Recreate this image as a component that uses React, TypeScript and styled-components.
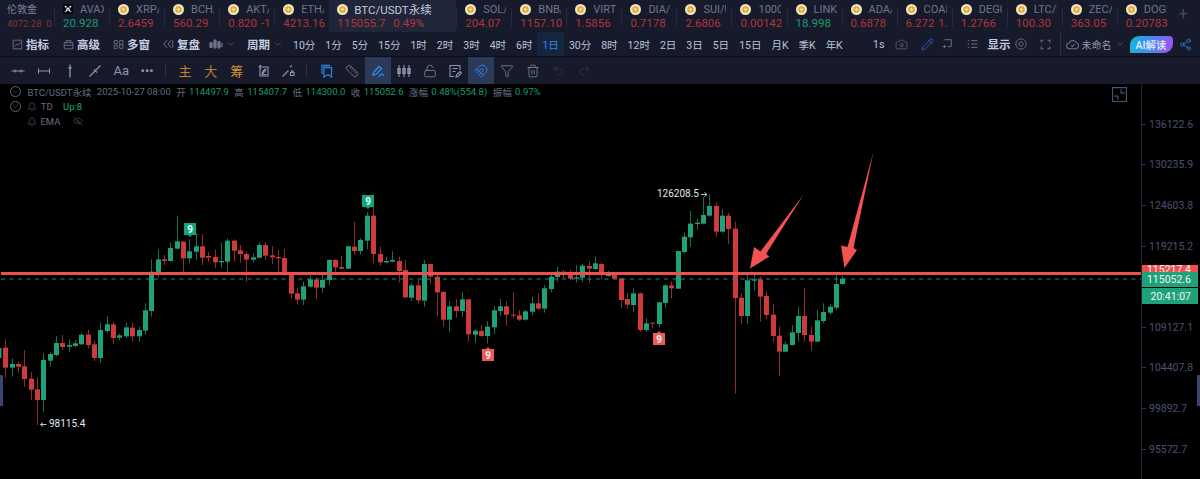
import React from "react";
import styled, { createGlobalStyle } from "styled-components";
import {
  Bell,
  Camera,
  ChevronDown,
  EyeOff,
  Filter,
  LockOpen,
  Magnet,
  Pencil,
  Redo2,
  Ruler,
  Share2,
  Trash2,
  Undo2,
} from "lucide-react";

const FONT = `Roboto, "Noto Sans CJK SC", sans-serif`;

const GlobalStyle = createGlobalStyle`
  html, body { margin: 0; padding: 0; background: #000; }
  body { font-family: ${FONT}; overflow: hidden; }
`;

const Page = styled.div`
  width: 1200px;
  height: 479px;
  display: flex;
  flex-direction: column;
  overflow: hidden;
  background: #000;
`;

/* ticker strip */
const TickerRow = styled.div`
  height: 32px;
  display: flex;
  background: #161a2b;
  flex: none;
`;

const GoldCell = styled.div`
  width: 54px;
  flex: none;
  padding: 3px 0 0 7px;
  box-sizing: border-box;
  color: #7d8397;
  font-size: 10px;
  line-height: 13px;
  & > b {
    display: block;
    font-weight: 400;
    color: #86303a;
    font-size: 9.5px;
    line-height: 12px;
    margin-top: 2px;
    white-space: nowrap;
  }
`;

const TickerCell = styled.div<{ $active?: boolean }>`
  width: ${(p) => (p.$active ? "127px" : "55.05px")};
  flex: none;
  box-sizing: border-box;
  position: relative;
  padding: 3px 0 0 ${(p) => (p.$active ? "8px" : "9px")};
  background: ${(p) => (p.$active ? "#1f2639" : "transparent")};
  overflow: hidden;
  &::before {
    content: "";
    display: ${(p) => (p.$active ? "none" : "block")};
    position: absolute;
    left: 0;
    top: 8px;
    height: 18px;
    width: 1px;
    background: #262c3f;
  }
`;

const TickerName = styled.div<{ $active?: boolean }>`
  display: flex;
  align-items: center;
  gap: ${(p) => (p.$active ? "6px" : "7px")};
  height: 12px;
  width: ${(p) => (p.$active ? "auto" : "41px")};
  overflow: hidden;
  white-space: nowrap;
  color: ${(p) => (p.$active ? "#c3cbdc" : "#6f7689")};
  font-size: ${(p) => (p.$active ? "11.5px" : "11px")};
  & > svg { flex: none; }
`;

const TickerPrice = styled.div<{ $up?: boolean; $active?: boolean }>`
  margin-top: 1px;
  width: ${(p) => (p.$active ? "auto" : "42px")};
  overflow: hidden;
  white-space: nowrap;
  color: ${(p) => (p.$up ? "#1d9a70" : "#b5343a")};
  font-size: 11.5px;
  line-height: 14px;
  word-spacing: 1px;
`;

const PlusCell = styled.div`
  flex: none;
  margin-left: 7px;
  color: #454c60;
  font-size: 16px;
  line-height: 28px;
`;

/* main toolbar */
const MainBar = styled.div`
  height: 24px;
  display: flex;
  align-items: stretch;
  background: #161a2b;
  padding-left: 12px;
  border-bottom: 1px solid #0b0e18;
  flex: none;
  color: #bcc6da;
  font-size: 11px;
`;

const BarItem = styled.div<{ $ml?: number; $strong?: boolean; $tone?: string }>`
  display: flex;
  align-items: center;
  gap: 3px;
  flex: none;
  margin-left: ${(p) => p.$ml ?? 0}px;
  font-size: ${(p) => (p.$strong ? "11.5px" : "11px")};
  color: ${(p) => (p.$strong ? "#c3cde0" : "#b3bdd2")};
  font-weight: ${(p) => (p.$strong ? 600 : 400)};
  white-space: nowrap;
  & > svg { color: ${(p) => p.$tone ?? "#6d7488"}; flex: none; }
`;

const LayoutName = styled.span`
  font-size: 10px;
  color: #8e96aa;
`;

const PeriodList = styled.div`
  display: flex;
  margin-left: 5px;
`;

const Period = styled.div<{ $active?: boolean }>`
  display: flex;
  align-items: center;
  padding: 0 5px;
  color: ${(p) => (p.$active ? "#2a8bf2" : "#b9c4d9")};
  background: ${(p) => (p.$active ? "#16263f" : "transparent")};
  font-size: 10.5px;
  white-space: nowrap;
`;

const BarDivider = styled.div`
  width: 1px;
  margin-left: 9px;
  background: #2b3145;
  flex: none;
`;

const AiButton = styled.div`
  margin: 4px 0 3px 5px;
  width: 43px;
  display: flex;
  align-items: center;
  justify-content: center;
  color: #e8eefc;
  font-size: 10.5px;
  font-weight: 500;
  border-radius: 9px 4px 9px 0;
  background: linear-gradient(100deg, #16b7d8 0%, #3f8ef0 45%, #a44df0 100%);
  flex: none;
`;

/* drawing toolbar */
const DrawBar = styled.div`
  height: 27px;
  display: flex;
  align-items: stretch;
  padding-left: 5px;
  background: #161a2b;
  flex: none;
`;

const DrawCell = styled.div<{ $active?: boolean; $tone?: string }>`
  width: 25.85px;
  flex: none;
  display: flex;
  align-items: center;
  justify-content: center;
  font-size: 13px;
  color: ${(p) => p.$tone ?? "#8f97ab"};
  background: ${(p) => (p.$active ? "#2a3a58" : "transparent")};
`;

const DrawDivider = styled.div`
  width: 1px;
  height: 13px;
  align-self: center;
  margin: 0 6px 0 5px;
  background: #2b3145;
  flex: none;
`;

/* chart */
const ChartWrap = styled.div`
  flex: 1;
  display: flex;
  min-height: 0;
`;

const Plot = styled.div`
  flex: 1;
  position: relative;
  padding: 0 0 0 10px;
`;

const PlotSvg = styled.svg`
  position: absolute;
  inset: 0;
  width: 100%;
  height: 100%;
`;

const CollapseBox = styled.div`
  position: absolute;
  top: 3px;
  right: 14px;
  width: 15px;
  height: 14px;
  color: #4a5370;
`;

const Legend = styled.div`
  position: relative;
  display: flex;
  flex-direction: column;
  color: #666e82;
  font-size: 9.5px;
`;

const LegendRow = styled.div<{ $indent?: boolean }>`
  height: 15px;
  display: flex;
  align-items: center;
  gap: 3.4px;
  white-space: nowrap;
  padding-left: ${(p) => (p.$indent ? "17px" : "0")};
`;

const CircleChevron = styled.span`
  width: 11px;
  height: 11px;
  margin-right: 3px;
  border: 1px solid #5f677b;
  border-radius: 50%;
  box-sizing: border-box;
  display: flex;
  align-items: center;
  justify-content: center;
  flex: none;
`;

const LegendLabel = styled.span<{ $ml?: number }>`
  margin-left: ${(p) => p.$ml ?? 0}px;
`;

const LegendValue = styled.span`
  color: #1a9a73;
`;

const UpValue = styled.span`
  color: #0fb27d;
  margin-left: 7px;
`;

const Axis = styled.div`
  width: 59px;
  flex: none;
  position: relative;
  box-sizing: border-box;
  border-left: 1px solid #20273a;
  padding-top: 20px;
`;

const AxisSlot = styled.div`
  height: 40.6px;
  display: flex;
  align-items: center;
  gap: 3px;
  color: #4a5273;
  font-size: 10.5px;
  &::before {
    content: "";
    width: 4px;
    height: 1px;
    background: #2c3450;
    flex: none;
  }
`;

const AxisBadge = styled.div<{ $tone: string; $top: number; $h: number }>`
  position: absolute;
  left: 0;
  width: 56px;
  top: ${(p) => p.$top}px;
  height: ${(p) => p.$h}px;
  background: ${(p) => p.$tone};
  color: #eef5f2;
  font-size: 10.5px;
  display: flex;
  align-items: center;
  justify-content: flex-end;
  padding-right: 7px;
  box-sizing: border-box;
  overflow: hidden;
`;

const EdgeHandle = styled.div<{ $side: "left" | "right" }>`
  position: absolute;
  top: 291px;
  ${(p) => p.$side}: 0;
  width: 3px;
  height: 31px;
  background: #3a4570;
`;

const CHEVRON = <ChevronDown size={10} strokeWidth={1.4} />;

const CoinIcon = () => (
  <svg width="11" height="11" viewBox="0 0 11 11">
    <circle cx="5.5" cy="5.5" r="5.5" fill="#f0e6c8" />
    <circle cx="5.5" cy="5.5" r="3.2" fill="#e2a62e" />
    <rect x="4.2" y="4.2" width="2.6" height="2.6" fill="#f7e3ac" transform="rotate(45 5.5 5.5)" />
  </svg>
);

const AvaxIcon = () => (
  <svg width="10" height="10" viewBox="0 0 10 10">
    <rect width="10" height="10" fill="#05060a" />
    <path d="M2 2l6 6M8 2L2 8" stroke="#e4e8f0" strokeWidth="1.6" strokeDasharray="2 .6" />
  </svg>
);

const Line = ({ d, size = 14, w = 1.1 }: { d: string; size?: number; w?: number }) => (
  <svg width={size} height={size} viewBox="0 0 14 14" fill="none" stroke="currentColor" strokeWidth={w}>
    <path d={d} />
  </svg>
);

const TICKERS: [string, string, boolean?][] = [
  ["AVAX/USDT", "20.928", true],
  ["XRP/USDT", "2.6459"],
  ["BCH/USDT", "560.29"],
  ["AKT/USDT", "0.820 -1.2%"],
  ["ETH/USDT", "4213.16"],
];
const TICKERS_AFTER: [string, string, boolean?][] = [
  ["SOL/USDT", "204.07"],
  ["BNB/USDT", "1157.10"],
  ["VIRTUAL", "1.5856"],
  ["DIA/USDT", "0.7178"],
  ["SUI/USDT", "2.6806"],
  ["1000PEPE", "0.00142"],
  ["LINK/USDT", "18.998", true],
  ["ADA/USDT", "0.6878"],
  ["COAI/USDT", "6.272 1.3%"],
  ["DEGO/USDT", "1.2766"],
  ["LTC/USDT", "100.30"],
  ["ZEC/USDT", "363.05"],
  ["DOGE/USDT", "0.20783"],
];

const PERIODS = ["10分", "1分", "5分", "15分", "1时", "2时", "3时", "4时", "6时", "1日", "30分", "8时", "12时", "2日", "3日", "5日", "15日", "月K", "季K", "年K"];

const AXIS = ["136122.6", "130235.9", "124603.8", "119215.2", "", "109127.1", "104407.8", "99892.7", "95572.7"];

// kind, body top, body bottom, wick top, wick bottom (3x px measured below y=190)
const CANDLES = `r 473 533 448 563,g 522 533 505 560,r 522 530 514 548,r 529 567 480 590,r 566 599 546 630,r 598 630 562 705,g 510 630 490 665,g 492 512 485 530,g 459 495 438 500,r 459 471 435 480,
g 465 470 448 485,g 460 468 450 472,g 434 463 430 465,r 434 465 420 475,r 463 504 453 513,g 420 504 398 518,g 403 423 378 430,r 403 444 395 462,g 436 443 430 450,g 412 439 398 445,
r 413 439 398 455,g 420 439 410 456,g 361 422 340 434,g 245 363 208 380,g 208 250 178 262,r 208 213 195 225,g 174 213 158 215,g 154 176 77 178,r 155 205 155 250,g 184 205 148 220,
g 169 185 130 210,r 169 203 132 225,r 198 203 186 215,r 201 217 178 235,g 213 217 157 233,g 152 215 145 245,r 152 182 148 215,r 181 192 165 218,r 192 209 185 275,g 202 209 190 218,
g 165 203 157 205,r 165 197 157 210,r 196 202 168 222,r 201 205 180 248,r 204 250 177 258,r 255 311 245 325,r 310 329 293 343,g 289 329 275 345,g 268 290 255 292,r 269 293 262 326,
g 270 293 255 308,g 210 270 207 287,r 210 232 207 245,r 231 236 198 238,g 169 236 168 237,r 170 183 96 195,g 150 183 144 193,g 77 152 67 178,r 77 192 50 220,r 192 217 170 227,
g 213 217 200 220,g 210 215 184 217,r 213 243 200 277,
r 240 322 210 325,g 286 323 278 333,r 286 331 270 340,g 222 332 210 350,r 222 260 222 280,r 260 307 255 378,r 306 389 303 410,g 349 389 333 426,r 349 363 327 383,g 328 363 306 380,
r 328 433 328 455,g 422 434 418 458,r 423 438 405 440,g 410 438 393 460,g 361 412 347 432,g 349 363 327 378,r 349 374 335 408,r 374 377 307 385,r 376 389 360 393,g 364 389 360 392,
g 340 365 320 376,r 340 356 310 360,g 295 356 285 368,g 260 297 255 307,g 245 261 230 275,r 245 250 240 265,r 252 266 240 270,g 262 266 225 278,g 227 263 222 278,r 228 236 214 277,
g 220 237 200 240,r 222 255 218 268,g 250 258 243 260,r 252 266 250 268,r 265 330 264 354,r 327 344 308 356,g 310 345 295 367,r 310 420 308 425,g 400 420 385 426,r 398 401 398 414,
g 337 402 335 412,g 286 339 283 353,r 286 295 274 326,g 183 296 183 296,g 140 186 128 190,g 101 142 63 170,g 98 102 87 120,g 75 101 20 103,g 48 77 12 80,r 48 125 37 140,
g 77 125 58 128,r 77 117 68 162,r 116 324 95 610,r 323 378 310 402,g 271 378 255 402,g 268 272 255 302,r 268 320 260 395,r 318 375 304 388,r 374 438 342 457,r 437 485 410 558,
g 463 485 455 487,g 427 465 405 466,g 378 429 350 455,r 378 435 295 455,r 435 455 410 482,g 391 455 360 455,g 366 393 340 400,g 350 368 343 375,g 282 353 255 360,g 266 282 258 284`
  .split(",")
  .map((row) => {
    const [kind, ...nums] = row.trim().split(" ");
    const [top, bottom, high, low] = nums.map((n) => 190 + Number(n) / 3);
    return { kind, top, bottom, high, low };
  });

const candleX = (i: number) => 5.33 + i * 6.342;

const TONE = {
  r: { body: "#cf3a3b", wick: "#8f2b2d" },
  g: { body: "#1fa27a", wick: "#176f57" },
};

const Candles = () => (
  <g>
    <rect x="-1" y="348" width="2.5" height="10" fill="#1fa27a" />
    {CANDLES.map((c, i) => {
      const x = candleX(i);
      const tone = TONE[c.kind as "r" | "g"];
      return (
        <g key={i}>
          <rect x={Math.round(x)} y={c.high} width="1" height={c.low - c.high} fill={tone.wick} />
          <rect x={Math.round(x) - 2} y={c.top} width="5" height={Math.max(c.bottom - c.top, 1)} fill={tone.body} />
        </g>
      );
    })}
  </g>
);

const Flag = ({ x, y, tone, down }: { x: number; y: number; tone: string; down?: boolean }) => (
  <g>
    <rect x={x} y={y} width="12" height="12" fill={tone} />
    <path
      d={
        down
          ? `M${x + 4} ${y + 12}h4l-2 2z`
          : `M${x + 4} ${y}h4l-2 -2z`
      }
      fill={tone}
    />
    <text x={x + 6} y={y + 9.5} fill="#f2f7f5" fontSize="10" fontWeight="700" textAnchor="middle" fontFamily="Roboto">
      9
    </text>
  </g>
);

const Arrow = ({ points }: { points: string }) => <polygon points={points} fill="#f25252" />;

const ChartDrawing = () => (
  <PlotSvg viewBox="0 84 1141 395" preserveAspectRatio="none">
    <Candles />
    <path d="M1 279H1141" stroke="#1a8f6d" strokeWidth="1" strokeDasharray="4 4.5" />
    <rect x="1" y="272" width="1140" height="3" fill="#ee5052" />
    <Flag x={184} y={223} tone="#0fa67e" down />
    <Flag x={362} y={195} tone="#0fa67e" down />
    <Flag x={482} y={349} tone="#f0595a" />
    <Flag x={653} y={333} tone="#f0595a" />
    <text x="49" y="427" fill="#e4e8f0" fontSize="10" fontFamily="Roboto">98115.4</text>
    <path d="M40.5 424.5h6M43 422.5l-2.5 2 2.5 2" stroke="#bfc5d2" fill="none" />
    <text x="657" y="197" fill="#e4e8f0" fontSize="10" fontFamily="Roboto">126208.5</text>
    <path d="M701 194.5h6M704.5 192.5l2.5 2-2.5 2" stroke="#bfc5d2" fill="none" />
    <Arrow points="804,194 766,254 769.5,256.5 750,268.5 754,247 760.5,251.5" />
    <Arrow points="873.5,151.5 853.5,248 857,250 844.5,268 841,245.5 847.5,247" />
  </PlotSvg>
);

const Ticker = ({ item }: { item: [string, string, boolean?] }) => (
  <TickerCell>
    <TickerName>
      {item[0].startsWith("AVAX") ? <AvaxIcon /> : <CoinIcon />}
      {item[0]}
    </TickerName>
    <TickerPrice $up={item[2]}>{item[1]}</TickerPrice>
  </TickerCell>
);

const App = () => (
  <Page>
    <GlobalStyle />
    <TickerRow>
      <GoldCell>
        伦敦金
        <b>4072.28&nbsp; 0</b>
      </GoldCell>
      {TICKERS.map((t) => (
        <Ticker key={t[0]} item={t} />
      ))}
      <TickerCell $active>
        <TickerName $active>
          <CoinIcon />
          BTC/USDT永续
        </TickerName>
        <TickerPrice $active>115055.7&nbsp; 0.49%</TickerPrice>
      </TickerCell>
      {TICKERS_AFTER.map((t) => (
        <Ticker key={t[0]} item={t} />
      ))}
      <PlusCell>+</PlusCell>
    </TickerRow>

    <MainBar>
      <BarItem $strong>
        <Line size={11} d="M1.5 1.5h11v11h-11zM3.5 9.5l2.5-3 2 1.5 3-4" />
        指标
      </BarItem>
      <BarItem $strong $ml={14}>
        <Line size={11} d="M1.5 4.5h11v8h-11zM4 4.5V2h6v2.5M1.5 8h11" />
        高级
      </BarItem>
      <BarItem $strong $ml={13}>
        <Line size={11} d="M1.5 2h4v4h-4zM1.5 8h4v4h-4zM8.5 2h4v10h-4zM8.5 7h4" />
        多窗
      </BarItem>
      <BarItem $strong $ml={12}>
        <Line size={12} d="M6 2.5L2 7l4 4.5M11 2.5L7 7l4 4.5M12.5 3v8" />
        复盘
      </BarItem>
      <BarItem $ml={9}>
        <Line size={14} w={1.3} d="M2 5v6M1 6h2v4H1zM6 2v10M5 4h2v6H5zM10 4v8M9 5h2v5H9zM13 6v4" />
        {CHEVRON}
      </BarItem>
      <BarItem $strong $ml={11}>
        周期
        {CHEVRON}
      </BarItem>
      <PeriodList>
        {PERIODS.map((p) => (
          <Period key={p} $active={p === "1日"}>
            {p}
          </Period>
        ))}
      </PeriodList>
      <BarItem $ml={25}>1s</BarItem>
      <BarItem $ml={10}>
        <Camera size={13} strokeWidth={1.2} />
      </BarItem>
      <BarItem $ml={13} $tone="#2a78d8">
        <Pencil size={13} strokeWidth={1.3} />
      </BarItem>
      <BarItem $ml={7}>
        <Line size={12} d="M4 2h8v8H8M2 10h4M4 8v4" />
      </BarItem>
      <BarItem $ml={14}>
        <Line size={12} d="M1 3h1.5M1 7h1.5M1 11h1.5M5 3h7M5 7h7M5 11h7" />
      </BarItem>
      <BarItem $strong $ml={9}>显示</BarItem>
      <BarItem $ml={4}>
        <Line size={12} d="M7 1a6 6 0 1 0 .01 0zM7 4.5a2.5 2.5 0 1 0 .01 0z" />
      </BarItem>
      <BarItem $ml={13}>
        <Line size={11} d="M1.5 4.5v-3h3M9.5 1.5h3v3M12.5 9.5v3h-3M4.5 12.5h-3v-3" w={1.3} />
      </BarItem>
      <BarDivider />
      <BarItem $ml={5}>
        <Line size={13} d="M4 11.5a3 3 0 0 1-.5-6A4 4 0 0 1 11 5a3.3 3.3 0 0 1-.5 6.5zM5.5 8l1.5 1.2L9 6.5" />
        <LayoutName>未命名</LayoutName>
        {CHEVRON}
      </BarItem>
      <AiButton>AI解读</AiButton>
      <BarItem $ml={6} $tone="#2a86e6">
        <Share2 size={13} strokeWidth={1.4} />
      </BarItem>
    </MainBar>

    <DrawBar>
      <DrawCell><Line d="M0.5 7h13M4 5.5v3M10 5.5v3" /></DrawCell>
      <DrawCell><Line d="M1.5 7h11M1.5 4.5v5M12.5 4.5v5" /></DrawCell>
      <DrawCell><Line d="M7 0.5v13M5.5 4h3" w={1.3} /></DrawCell>
      <DrawCell><Line d="M1.5 12.5l11-11M6 5.5l3 3" /></DrawCell>
      <DrawCell>Aa</DrawCell>
      <DrawCell>•••</DrawCell>
      <DrawDivider />
      <DrawCell $tone="#c97f2e">主</DrawCell>
      <DrawCell $tone="#b98334">大</DrawCell>
      <DrawCell $tone="#d9952c">筹</DrawCell>
      <DrawCell><Line d="M3 3h9v9H4V5M3 3l2-2M3 3l2 2M6 10l1-3 2-2 1 1-2 2zM5.5 10.5h5" /></DrawCell>
      <DrawCell><Line d="M1.5 12.5l6-6M9 3l2-1.5M9.5 11.5h3.5v-3h-3.5zM10.5 8.5v-1.5h1.5v1.5" /></DrawCell>
      <DrawDivider />
      <DrawCell $tone="#2a7fd8"><Line d="M3 10V1.5h8M5 3.5h7.5V13L9 10.5 5 13z" w={1.3} /></DrawCell>
      <DrawCell><Ruler size={14} strokeWidth={1.2} /></DrawCell>
      <DrawCell $active $tone="#2a8bf2"><Line w={1.3} d="M2.5 8.5L8 2.5l2.5 2L5 10.5l-3 .5zM7.5 12.5c1.5 0 1.5-2.5 3-2.5s1 1.5 2.5 1.5" /></DrawCell>
      <DrawCell><Line d="M2 1v12M7 1v12M12 1v12M0.8 4.5h2.4v5H0.8zM5.8 4.5h2.4v5H5.8zM10.8 4.5h2.4v5h-2.4z" /></DrawCell>
      <DrawCell><LockOpen size={14} strokeWidth={1.2} /></DrawCell>
      <DrawCell><Line d="M12 6V1.5H2v11h4M4.5 4.5h5M4.5 7.5h3M8 13l.5-2 3.5-3.5 1.5 1.5L10 12.5z" /></DrawCell>
      <DrawCell $active $tone="#2a8bf2"><Magnet size={14} strokeWidth={1.5} /></DrawCell>
      <DrawCell><Filter size={14} strokeWidth={1.2} /></DrawCell>
      <DrawCell><Trash2 size={14} strokeWidth={1.2} /></DrawCell>
      <DrawCell $tone="#3a4154"><Undo2 size={13} strokeWidth={1.2} /></DrawCell>
      <DrawCell $tone="#3a4154"><Redo2 size={13} strokeWidth={1.2} /></DrawCell>
    </DrawBar>

    <ChartWrap>
      <Plot>
        <ChartDrawing />
        <Legend>
          <LegendRow>
            <CircleChevron><ChevronDown size={9} strokeWidth={1.2} /></CircleChevron>
            BTC/USDT永续
            <LegendLabel $ml={2}>2025-10-27 08:00</LegendLabel>
            <LegendLabel $ml={2}>开</LegendLabel>
            <LegendValue>114497.9</LegendValue>
            <LegendLabel $ml={2}>高</LegendLabel>
            <LegendValue>115407.7</LegendValue>
            <LegendLabel $ml={2}>低</LegendLabel>
            <LegendValue>114300.0</LegendValue>
            <LegendLabel $ml={2}>收</LegendLabel>
            <LegendValue>115052.6</LegendValue>
            <LegendLabel $ml={2}>涨幅</LegendLabel>
            <LegendValue>0.48%(554.8)</LegendValue>
            <LegendLabel $ml={2}>振幅</LegendLabel>
            <LegendValue>0.97%</LegendValue>
          </LegendRow>
          <LegendRow>
            <CircleChevron><ChevronDown size={9} strokeWidth={1.2} /></CircleChevron>
            <Bell size={10} strokeWidth={1.3} />
            TD
            <UpValue>Up:8</UpValue>
          </LegendRow>
          <LegendRow $indent>
            <Bell size={10} strokeWidth={1.3} />
            EMA
            <LegendLabel $ml={9}>
              <EyeOff size={10} strokeWidth={1.2} />
            </LegendLabel>
          </LegendRow>
        </Legend>
        <CollapseBox>
          <Line size={15} d="M0.5 0.5h13v13h-13zM8.5 2v3.5H12M2 8.5h3.5V12" />
        </CollapseBox>
        <EdgeHandle $side="left" />
      </Plot>
      <Axis>
        {AXIS.map((label, i) => (
          <AxisSlot key={i}>{label}</AxisSlot>
        ))}
        <AxisBadge $tone="#ee5052" $top={181} $h={8}>115217.4</AxisBadge>
        <AxisBadge $tone="#1fa27a" $top={188} $h={15}>115052.6</AxisBadge>
        <AxisBadge $tone="#1fa27a" $top={204} $h={16}>20:41:07</AxisBadge>
        <EdgeHandle $side="right" />
      </Axis>
    </ChartWrap>
  </Page>
);

export default App;
